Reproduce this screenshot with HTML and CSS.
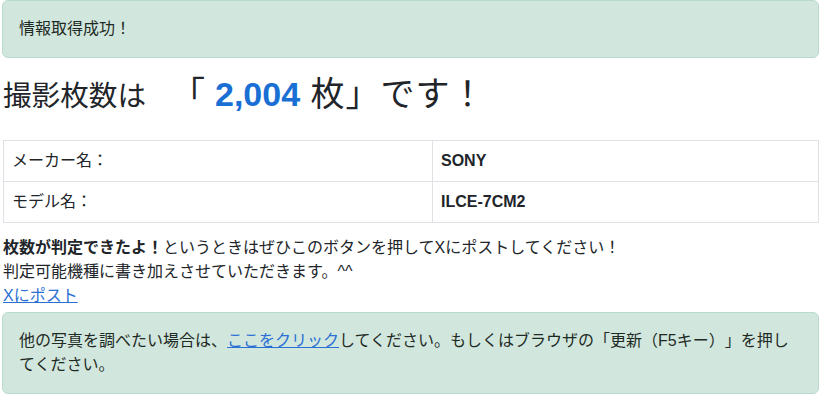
FILE: index.html
```html
<!DOCTYPE html>
<html lang="ja">
<head>
<meta charset="utf-8">
<title>撮影枚数</title>
<link rel="stylesheet" href="styles.css">
</head>
<body>
<div class="wrap">
  <div class="alert">情報取得成功！</div>
  <h2 class="title">撮影枚数は<span class="big"><span class="br-open">「</span><b class="count">2,004</b> 枚」です！</span></h2>
  <table class="info">
    <tr><td class="label">メーカー名：</td><td class="value">SONY</td></tr>
    <tr><td class="label">モデル名：</td><td class="value">ILCE-7CM2</td></tr>
  </table>
  <p class="note"><b>枚数が判定できたよ！</b>というときはぜひこのボタンを押してXにポストしてください！<br>判定可能機種に書き加えさせていただきます。^^<br><a href="#" class="link">Xにポスト</a></p>
  <div class="alert">他の写真を調べたい場合は、<a href="#" class="link">ここをクリック</a>してください。もしくはブラウザの「更新（F5キー）」を押してください。</div>
</div>
</body>
</html>
```
FILE: styles.css
```css
html, body {
  margin: 0;
  padding: 0;
  background: #ffffff;
}
body {
  font-family: "Liberation Sans", "Noto Sans CJK JP", sans-serif;
  font-size: 16px;
  line-height: 24px;
  color: #212529;
  text-spacing-trim: space-all;
}
.wrap {
  padding: 0 8px 0 2px;
}
.alert {
  background: #d1e7dd;
  border: 1px solid #badbcc;
  border-radius: 6px;
  padding: 16px;
  color: #1f2a25;
}
.title {
  font-size: 28.6px;
  line-height: 34px;
  font-weight: 400;
  margin: 19px 0 27px 1px;
  color: #212529;
}
.big {
  font-size: 34px;
  letter-spacing: 1px;
}
.br-open {
  margin-left: 25px;
  margin-right: 9px;
}
.count {
  color: #1a6fd4;
  font-weight: 700;
  letter-spacing: 0;
}
.info {
  width: calc(100% - 1px);
  margin-left: 1px;
  border-collapse: collapse;
  table-layout: fixed;
}
.info td {
  border: 1px solid #dee2e6;
  padding: 8px;
  height: 24px;
}
.label {
  width: 412px;
}
.value {
  font-weight: 700;
}
.note {
  margin: 13px 0 4px 1px;
}
.link {
  color: #2a6fd3;
  text-decoration: underline;
}
```
